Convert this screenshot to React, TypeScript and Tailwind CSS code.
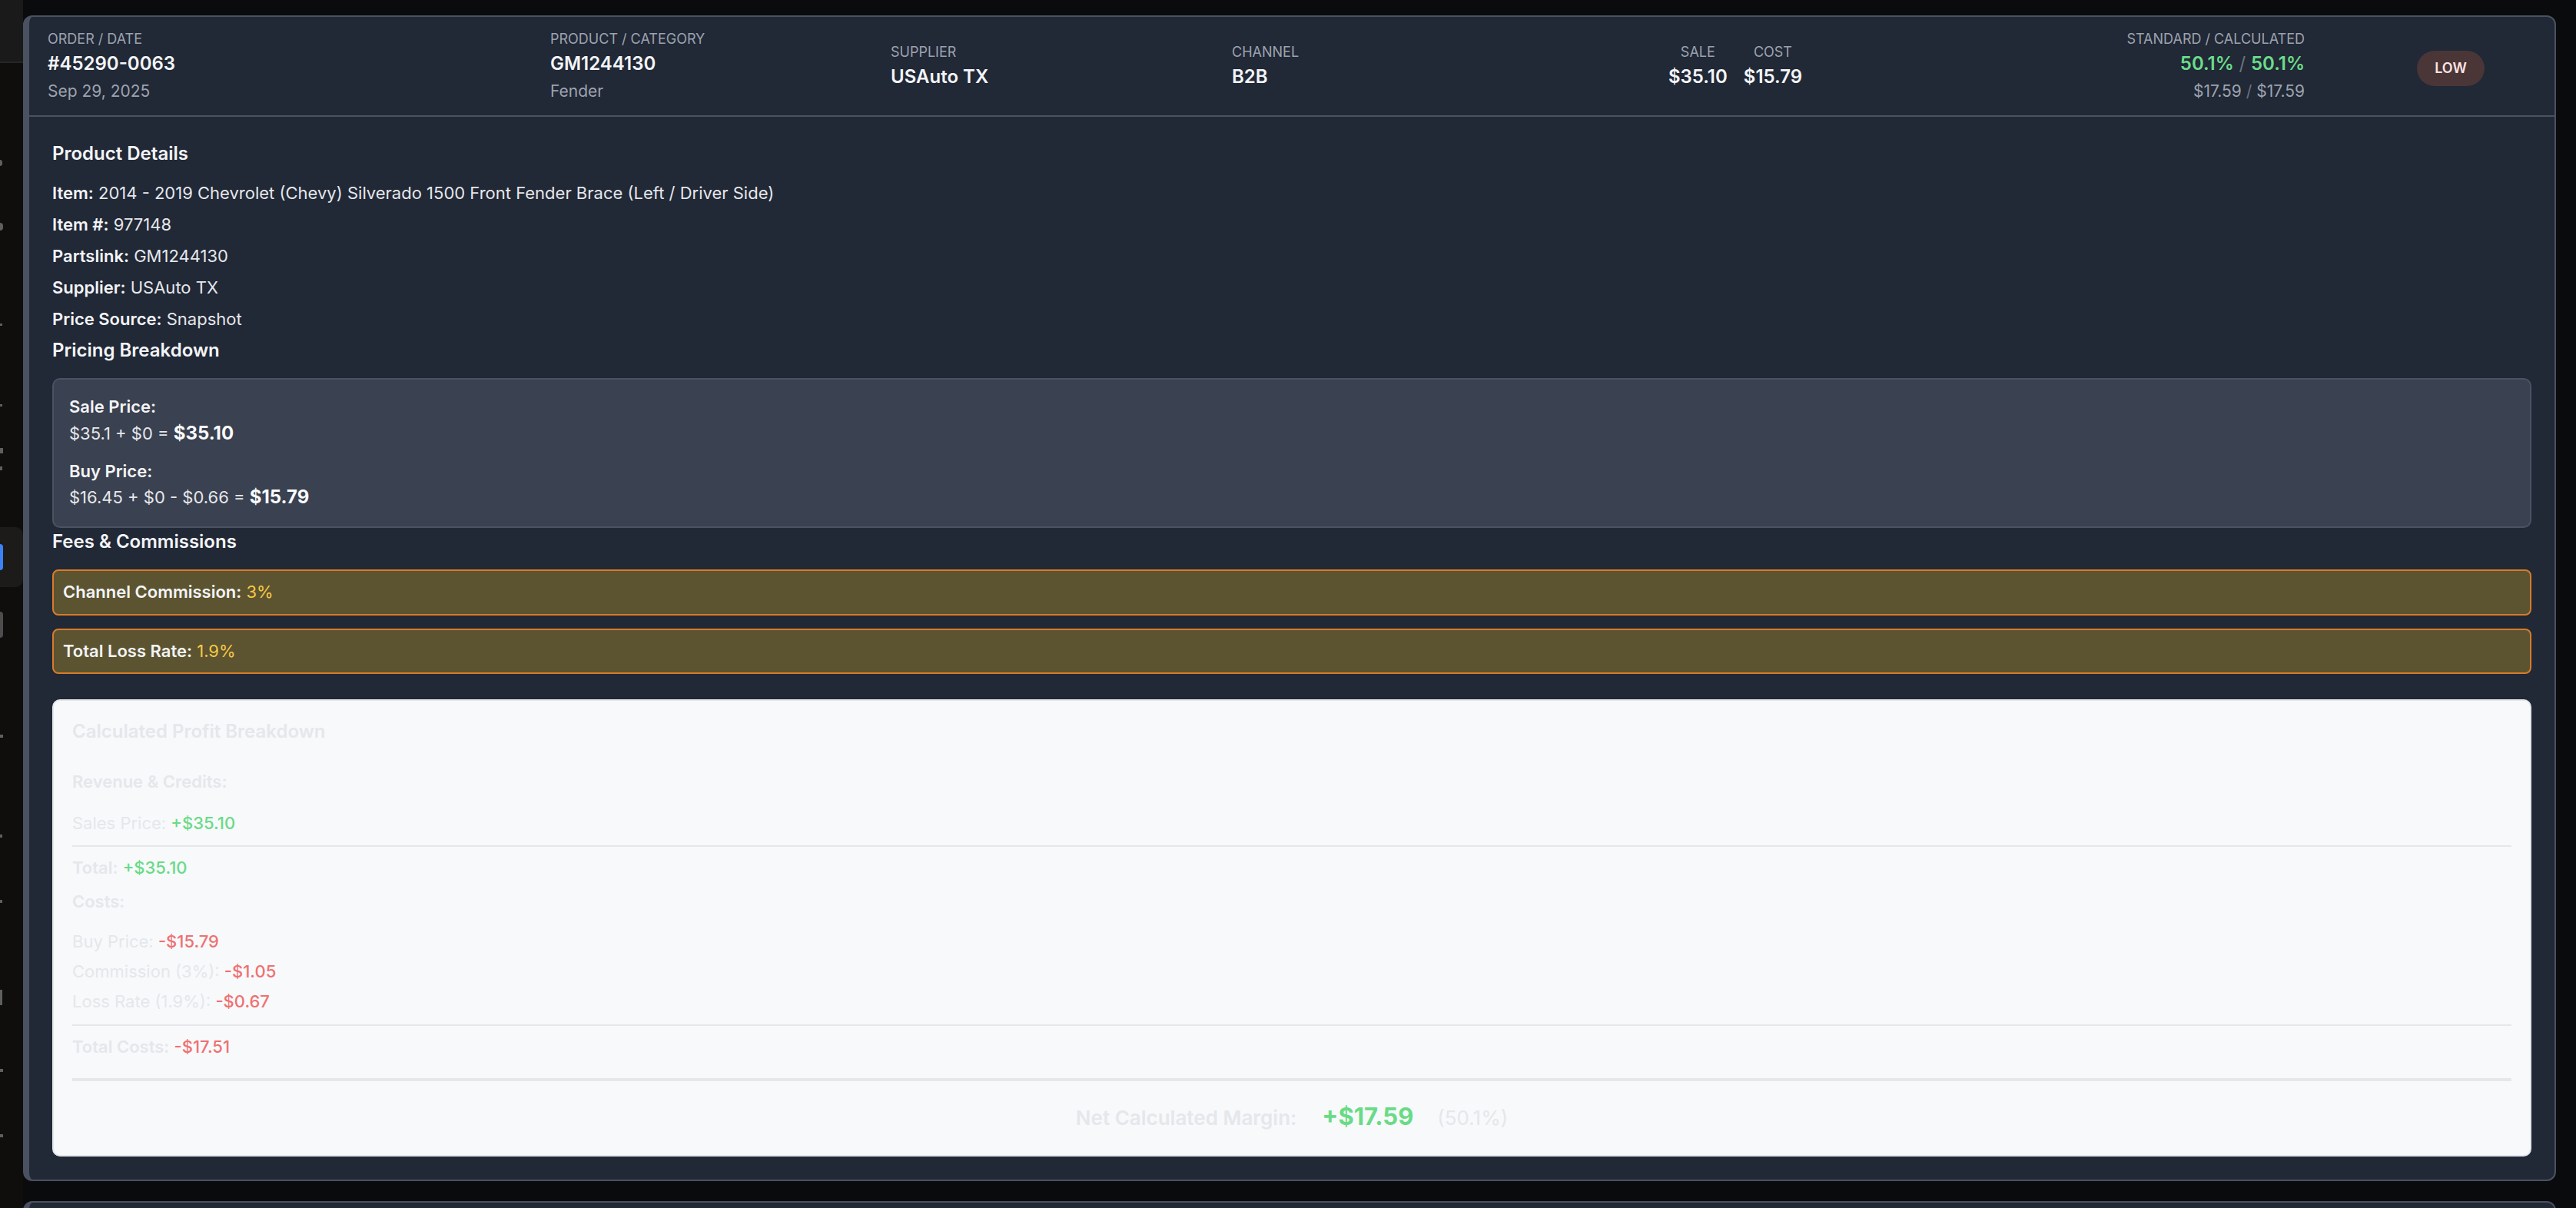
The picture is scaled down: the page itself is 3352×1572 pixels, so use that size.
import React from "react";

const FONT = "font-['Inter','Noto_Sans','Liberation_Sans',sans-serif]";

function Sidebar() {
  return (
    <aside className="flex h-full w-[30px] shrink-0 flex-col overflow-hidden bg-[#0f0e0d]">
      <div className="h-[82px] shrink-0 border-b-2 border-[#262626] bg-[#1a1a1a]" />
      <div className="flex flex-col">
        <div className="mt-[126px] h-[8px] w-[3px] rounded-r-sm bg-[#5f5f5f]" />
        <div className="mt-[74px] h-[10px] w-[4px] rounded-r-sm bg-[#5f5f5f]" />
        <div className="mt-[121px] h-[3px] w-[3px] bg-[#5f5f5f]" />
        <div className="mt-[102px] h-[3px] w-[3px] bg-[#5f5f5f]" />
        <div className="mt-[54px] h-[7px] w-[4px] bg-[#5f5f5f]" />
        <div className="mt-[17px] h-[5px] w-[3px] bg-[#5f5f5f]" />
        <div className="mt-[74px] flex h-[78px] w-[30px] items-center rounded-r-[10px] bg-[#1c1b1a]">
          <div className="h-[34px] w-[4px] rounded-r-sm bg-[#3b82f6]" />
        </div>
        <div className="mt-[32px] h-[34px] w-[4px] rounded-r-sm bg-[#4d4d4d]" />
        <div className="mt-[126px] h-[4px] w-[4px] bg-[#5f5f5f]" />
        <div className="mt-[126px] h-[4px] w-[3px] bg-[#5f5f5f]" />
        <div className="mt-[81px] h-[4px] w-[3px] bg-[#5f5f5f]" />
        <div className="mt-[113px] h-[20px] w-[3px] bg-[#5f5f5f]" />
        <div className="mt-[83px] h-[4px] w-[4px] bg-[#5f5f5f]" />
        <div className="mt-[81px] h-[4px] w-[4px] bg-[#5f5f5f]" />
      </div>
    </aside>
  );
}

function HeaderLabel({ children }: { children: React.ReactNode }) {
  return (
    <div className="text-[18px] leading-[27px] uppercase text-[#9ca3af]">{children}</div>
  );
}

function HeaderValue({ children }: { children: React.ReactNode }) {
  return (
    <div className="mt-[1px] text-[24px] font-semibold leading-[36px] text-[#f3f4f6]">
      {children}
    </div>
  );
}

function CardHeader() {
  return (
    <div className="flex items-center border-b-2 border-[#4a5160] px-[24px] py-[15px]">
      <div className="w-[654px] shrink-0">
        <HeaderLabel>Order / Date</HeaderLabel>
        <HeaderValue>#45290-0063</HeaderValue>
        <div className="mt-[2px] text-[21px] leading-[31.5px] text-[#9ca3af]">Sep 29, 2025</div>
      </div>
      <div className="w-[443px] shrink-0">
        <HeaderLabel>Product / Category</HeaderLabel>
        <HeaderValue>GM1244130</HeaderValue>
        <div className="mt-[2px] text-[21px] leading-[31.5px] text-[#9ca3af]">Fender</div>
      </div>
      <div className="w-[444px] shrink-0">
        <HeaderLabel>Supplier</HeaderLabel>
        <HeaderValue>USAuto TX</HeaderValue>
      </div>
      <div className="w-[443px] shrink-0">
        <HeaderLabel>Channel</HeaderLabel>
        <HeaderValue>B2B</HeaderValue>
      </div>
      <div className="flex w-[424px] shrink-0 justify-center gap-[21px]">
        <div className="text-center">
          <HeaderLabel>Sale</HeaderLabel>
          <HeaderValue>$35.10</HeaderValue>
        </div>
        <div className="text-center">
          <HeaderLabel>Cost</HeaderLabel>
          <HeaderValue>$15.79</HeaderValue>
        </div>
      </div>
      <div className="flex-1 text-right">
        <HeaderLabel>Standard / Calculated</HeaderLabel>
        <div className="mt-[1px] text-[24px] font-semibold leading-[36px]">
          <span className="text-[#6bdc8a]">50.1%</span>
          <span className="font-normal text-[#6b7280]"> / </span>
          <span className="text-[#6bdc8a]">50.1%</span>
        </div>
        <div className="mt-[2px] text-[21px] leading-[31.5px] text-[#9ca3af]">
          $17.59 <span className="text-[#6b7280]">/</span> $17.59
        </div>
      </div>
      <div className="ml-[79px] mt-[6px] flex w-[222px] shrink-0 justify-center">
        <span className="flex h-[46px] items-center rounded-full bg-[#4a3637] px-[23px] text-[18px] font-semibold text-[#fde4e4]">
          LOW
        </span>
      </div>
    </div>
  );
}

function SectionTitle({ children, className = "" }: { children: React.ReactNode; className?: string }) {
  return (
    <h3 className={`mb-[18px] text-[24px] font-semibold leading-[36px] text-[#f3f4f6] ${className}`}>
      {children}
    </h3>
  );
}

function Detail({ label, value }: { label: string; value: string }) {
  return (
    <p className="text-[22px] leading-[31.5px]">
      <span className="font-semibold text-[#f3f4f6]">{label}</span>{" "}
      <span className="text-[#e5e7eb]">{value}</span>
    </p>
  );
}

function FeeRow({ label, value }: { label: string; value: string }) {
  return (
    <div className="rounded-[8px] border-2 border-[#d97b2a] bg-[#5c5431] px-[12px] py-[12px] text-[22px] leading-[31.5px]">
      <span className="font-semibold text-[#f3f4f6]">{label}</span>{" "}
      <span className="text-[#f6c945]">{value}</span>
    </div>
  );
}

function LineItem({
  label,
  value,
  tone,
  strong = false,
  className = "",
}: {
  label: string;
  value: string;
  tone: "green" | "red";
  strong?: boolean;
  className?: string;
}) {
  return (
    <p className={`text-[22px] leading-[31.5px] ${className}`}>
      <span className={strong ? "font-semibold text-[#e5e7eb]" : "text-[#e5e7eb]"}>{label}</span>{" "}
      <span className={tone === "green" ? "font-medium text-[#69db87]" : "font-medium text-[#ef7171]"}>
        {value}
      </span>
    </p>
  );
}

function ProfitBreakdown() {
  return (
    <div className="mt-[33px] rounded-[10px] border-2 border-[#e5e7eb] bg-[#f8f9fb] px-[24px] pt-[22px] pb-[24px]">
      <h3 className="mb-[32px] text-[24px] font-semibold leading-[36px] text-[#e5e7eb]">
        Calculated Profit Breakdown
      </h3>

      <h4 className="text-[22px] font-semibold leading-[31.5px] text-[#e5e7eb]">Revenue &amp; Credits:</h4>
      <LineItem className="mt-[22px]" label="Sales Price:" value="+$35.10" tone="green" />
      <div className="mt-[13px] h-[2px] bg-[#e5e7eb]" />
      <LineItem className="mt-[12px]" label="Total:" value="+$35.10" tone="green" strong />

      <h4 className="mt-[12px] text-[22px] font-semibold leading-[31.5px] text-[#e5e7eb]">Costs:</h4>
      <div className="mt-[21px] flex flex-col gap-[7.5px]">
        <LineItem label="Buy Price:" value="-$15.79" tone="red" />
        <LineItem label="Commission (3%):" value="-$1.05" tone="red" />
        <LineItem label="Loss Rate (1.9%):" value="-$0.67" tone="red" />
      </div>
      <div className="mt-[13px] h-[2px] bg-[#e5e7eb]" />
      <LineItem className="mt-[12px]" label="Total Costs:" value="-$17.51" tone="red" strong />

      <div className="mt-[25px] h-[4px] bg-[#e5e7eb]" />
      <div className="mt-[22px] flex items-baseline justify-center leading-[48px]">
        <span className="text-[26px] font-semibold text-[#e5e7eb]">Net Calculated Margin:</span>
        <span className="ml-[33px] text-[31px] font-bold text-[#69db87]">+$17.59</span>
        <span className="ml-[31px] text-[26px] text-[#e5e7eb]">(50.1%)</span>
      </div>
    </div>
  );
}

function CardBody() {
  return (
    <div className="px-[30px] pt-[30px] pb-[30px]">
      <SectionTitle>Product Details</SectionTitle>
      <div className="flex flex-col gap-[9.5px]">
        <Detail label="Item:" value="2014 - 2019 Chevrolet (Chevy) Silverado 1500 Front Fender Brace (Left / Driver Side)" />
        <Detail label="Item #:" value="977148" />
        <Detail label="Partslink:" value="GM1244130" />
        <Detail label="Supplier:" value="USAuto TX" />
        <Detail label="Price Source:" value="Snapshot" />
      </div>

      <SectionTitle className="mt-[7px]">Pricing Breakdown</SectionTitle>
      <div className="rounded-[10px] border-2 border-[#4b5262] bg-[#3a4150] p-[20px]">
        <div className="mb-[16px]">
          <p className="text-[22px] font-semibold leading-[31.5px] text-[#f3f4f6]">Sale Price:</p>
          <p className="text-[22px] leading-[36px] text-[#e5e7eb]">
            $35.1 + $0 = <span className="text-[24px] font-bold text-[#f9fafb]">$35.10</span>
          </p>
        </div>
        <div>
          <p className="text-[22px] font-semibold leading-[31.5px] text-[#f3f4f6]">Buy Price:</p>
          <p className="text-[22px] leading-[36px] text-[#e5e7eb]">
            $16.45 + $0 - $0.66 = <span className="text-[24px] font-bold text-[#f9fafb]">$15.79</span>
          </p>
        </div>
      </div>

      <SectionTitle>Fees &amp; Commissions</SectionTitle>
      <div className="flex flex-col gap-[17px]">
        <FeeRow label="Channel Commission:" value="3%" />
        <FeeRow label="Total Loss Rate:" value="1.9%" />
      </div>

      <ProfitBreakdown />
    </div>
  );
}

export default function App() {
  return (
    <div className={`flex h-[1572px] w-full overflow-hidden bg-[#0a0b0d] ${FONT}`}>
      <Sidebar />
      <main className="flex min-w-0 flex-1 flex-col gap-[26px] pt-[20px] pr-[26px]">
        <section className="shrink-0 rounded-[12px] border-2 border-l-[8px] border-[#4a5160] bg-[#212836]">
          <CardHeader />
          <CardBody />
        </section>
        <section className="h-[120px] shrink-0 rounded-[12px] border-2 border-l-[8px] border-[#4a5160] bg-[#212836]" />
      </main>
    </div>
  );
}
